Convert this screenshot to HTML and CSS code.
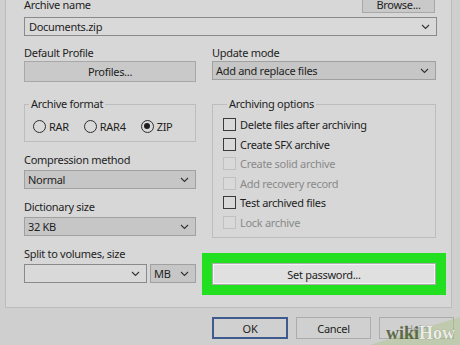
FILE: index.html
```html
<!DOCTYPE html>
<html lang="en">
<head>
    <meta charset="UTF-8">
    <title>Archive name and parameters</title>
    <link rel="stylesheet" href="styles.css">
</head>
<body>
    <div class="panel">
        <!-- Nama arsip -->
        <div class="name-row">
            <span class="label">Archive name</span>
            <button class="btn browse-btn">Browse...</button>
        </div>
        <div class="combo light wide">
            <span>Documents.zip</span>
            <svg class="chev" width="9" height="6" viewBox="0 0 9 6"><path d="M1 1l3.5 3.5L8 1" fill="none" stroke="#333" stroke-width="1.1"/></svg>
        </div>

        <div class="columns">
            <!-- Kolom kiri -->
            <div class="col left">
                <div class="label">Default Profile</div>
                <button class="btn profiles-btn">Profiles...</button>

                <fieldset class="group format">
                    <legend>Archive format</legend>
                    <div class="radios">
                        <label class="radio"><span class="dot"></span>RAR</label>
                        <label class="radio"><span class="dot"></span>RAR4</label>
                        <label class="radio"><span class="dot checked"></span>ZIP</label>
                    </div>
                </fieldset>

                <div class="label spaced">Compression method</div>
                <div class="combo">
                    <span>Normal</span>
                    <svg class="chev" width="9" height="6" viewBox="0 0 9 6"><path d="M1 1l3.5 3.5L8 1" fill="none" stroke="#333" stroke-width="1.1"/></svg>
                </div>

                <div class="label spaced">Dictionary size</div>
                <div class="combo">
                    <span>32 KB</span>
                    <svg class="chev" width="9" height="6" viewBox="0 0 9 6"><path d="M1 1l3.5 3.5L8 1" fill="none" stroke="#333" stroke-width="1.1"/></svg>
                </div>

                <div class="label spaced">Split to volumes, size</div>
                <div class="split-row">
                    <div class="combo light size">
                        <span></span>
                        <svg class="chev" width="9" height="6" viewBox="0 0 9 6"><path d="M1 1l3.5 3.5L8 1" fill="none" stroke="#333" stroke-width="1.1"/></svg>
                    </div>
                    <div class="combo unit">
                        <span>MB</span>
                        <svg class="chev" width="9" height="6" viewBox="0 0 9 6"><path d="M1 1l3.5 3.5L8 1" fill="none" stroke="#333" stroke-width="1.1"/></svg>
                    </div>
                </div>
            </div>

            <!-- Kolom kanan -->
            <div class="col right">
                <div class="label">Update mode</div>
                <div class="combo">
                    <span>Add and replace files</span>
                    <svg class="chev" width="9" height="6" viewBox="0 0 9 6"><path d="M1 1l3.5 3.5L8 1" fill="none" stroke="#333" stroke-width="1.1"/></svg>
                </div>

                <fieldset class="group options">
                    <legend>Archiving options</legend>
                    <label class="check"><span class="box"></span>Delete files after archiving</label>
                    <label class="check"><span class="box"></span>Create SFX archive</label>
                    <label class="check disabled"><span class="box"></span>Create solid archive</label>
                    <label class="check disabled"><span class="box"></span>Add recovery record</label>
                    <label class="check"><span class="box"></span>Test archived files</label>
                    <label class="check disabled"><span class="box"></span>Lock archive</label>
                </fieldset>

                <div class="highlight">
                    <button class="btn password-btn">Set password...</button>
                </div>
            </div>
        </div>
    </div>

    <!-- Tombol bawah -->
    <div class="footer">
        <button class="btn foot-btn default">OK</button>
        <button class="btn foot-btn">Cancel</button>
        <button class="btn foot-btn muted">Help</button>
    </div>

    <div class="wm-shape"></div>
    <div class="watermark">wiki<b>How</b></div>
</body>
</html>
```

FILE: styles.css
```css
body {
    margin: 0;
    width: 460px;
    height: 345px;
    overflow: hidden;
    background-color: #cfcfcf;
    font-family: "Noto Sans", "Open Sans", sans-serif;
    font-size: 11px;
    letter-spacing: -0.3px;
    color: #1e1e1e;
    position: relative;
}

.panel {
    margin: -20px 8px 0 5px;
    height: 328px;
    box-sizing: border-box;
    border: 1px solid #bcbcbc;
    background-color: #d7d7d7;
    padding: 0 14px 0 18px;
}

.label {
    line-height: 16px;
    height: 16px;
}

.label.spaced {
    margin-top: 10px;
}

.name-row {
    display: flex;
    justify-content: space-between;
    align-items: flex-end;
    height: 32px;
}

.btn {
    font-family: inherit;
    font-size: 11px;
    letter-spacing: -0.3px;
    color: #1e1e1e;
    background-color: #c9c9c9;
    border: 1px solid #a8a8a8;
    padding: 0;
    margin: 0;
    box-sizing: border-box;
}

.browse-btn {
    width: 73px;
    height: 28px;
    margin-right: 2px;
    padding-top: 10px;
}

.combo {
    display: flex;
    justify-content: space-between;
    align-items: center;
    height: 19px;
    box-sizing: border-box;
    border: 1px solid #a0a0a0;
    background-color: #c6c6c6;
    padding: 0 6px 0 3px;
    line-height: 17px;
}

.combo.light {
    background-color: #d9d9d9;
    border-color: #8a8a8a;
}

.combo.wide {
    margin: 4px 0 0 0;
    width: 413px;
    padding-left: 4px;
}

.columns {
    display: flex;
    gap: 16px;
    margin-top: 9px;
}

.col {
    display: flex;
    flex-direction: column;
}

.col.left {
    width: 172px;
}

.col.right {
    width: 224px;
}

.col .combo {
    margin-top: 2px;
}

.col .label + .combo {
    margin-top: 2px;
}

.col.right .label + .combo {
    margin-top: 0;
}

.profiles-btn {
    height: 21px;
}

.group {
    margin: 0;
    border: 1px solid #bdbdbd;
    padding: 0;
    min-width: 0;
}

.group legend {
    padding: 0 2px;
    margin-left: 4px;
    line-height: 14px;
}

.format {
    margin-top: 15px;
}

.radios {
    display: flex;
    align-items: center;
    gap: 15px;
    height: 30px;
    box-sizing: border-box;
    padding: 7px 0 7px 8px;
}

.radio {
    display: flex;
    align-items: center;
    gap: 3px;
}

.dot {
    width: 13px;
    height: 13px;
    box-sizing: border-box;
    border: 1px solid #2e2e2e;
    border-radius: 50%;
    background-color: #d9d9d9;
    display: flex;
    align-items: center;
    justify-content: center;
}

.dot.checked::after {
    content: "";
    width: 6px;
    height: 6px;
    border-radius: 50%;
    background-color: #1e1e1e;
}

.split-row {
    display: flex;
    gap: 3px;
    margin-top: 2px;
}

.split-row .combo {
    margin-top: 0;
}

.combo.size {
    width: 123px;
}

.combo.unit {
    width: 46px;
}

.options {
    margin-top: 17px;
    padding: 4px 0 5px 10px;
}

.check {
    display: flex;
    align-items: center;
    gap: 4px;
    height: 19.5px;
}

.box {
    width: 13px;
    height: 13px;
    box-sizing: border-box;
    border: 1px solid #3a3a3a;
    background-color: #d9d9d9;
}

.check.disabled {
    color: #8a8a8a;
}

.check.disabled .box {
    border-color: #c0c0c0;
}

.highlight {
    margin: 15px 0 0 -10px;
    width: 244px;
    height: 42px;
    box-sizing: border-box;
    background-color: #22e01f;
    padding: 10px;
}

.password-btn {
    width: 224px;
    height: 22px;
    background-color: #e0e0e0;
    border: 1px solid #adadad;
    box-shadow: inset 0 0 0 1px #f2f2f2;
}

.footer {
    display: flex;
    gap: 8px;
    margin: 9px 0 0 212px;
}

.foot-btn {
    width: 75px;
    height: 22px;
    background-color: #d0d0d0;
    border-color: #acacac;
}

.foot-btn.default {
    width: 76px;
    border: 2px solid #3e5a8e;
}

.foot-btn.muted {
    color: #9a9a9a;
}

.wm-shape {
    position: absolute;
    right: 0;
    bottom: 0;
    width: 90px;
    height: 28px;
    background-color: rgba(170, 195, 135, 0.45);
    clip-path: polygon(0 100%, 100% 0, 100% 100%);
}

.watermark {
    position: absolute;
    right: 5px;
    bottom: 3px;
    font-family: "Liberation Serif", serif;
    font-size: 18px;
    font-weight: bold;
    letter-spacing: 0;
    line-height: 18px;
    color: #4b5a34;
    opacity: 0.85;
}

.watermark b {
    color: #f4f4f4;
    text-shadow: 0 0 1px #6c7a50;
}
```
